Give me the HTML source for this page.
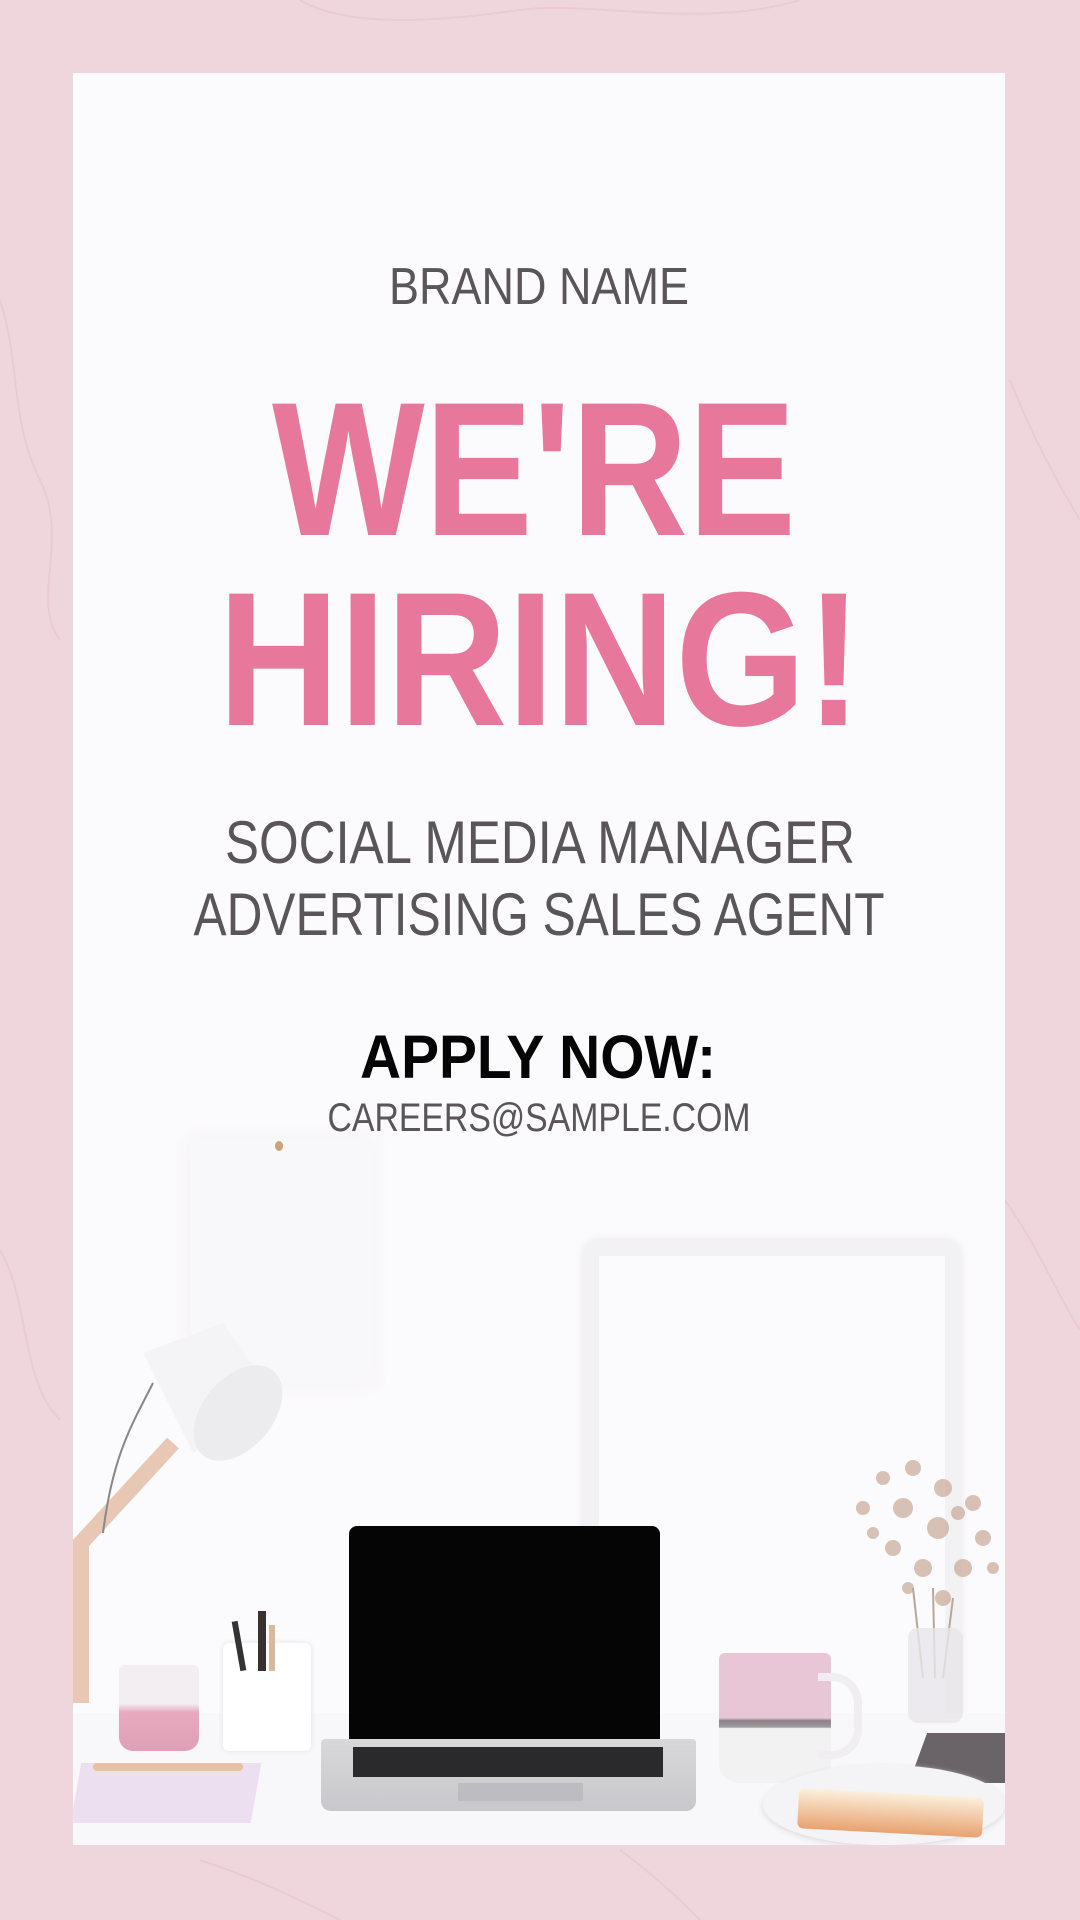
<!DOCTYPE html>
<html><head><meta charset="utf-8"><style>
html,body{margin:0;padding:0}
body{width:1080px;height:1920px;position:relative;overflow:hidden;background:#efd6dd;font-family:"Liberation Sans",sans-serif}
.a{position:absolute}
</style></head><body>
<svg class="a" style="left:0;top:0" width="1080" height="1920">
<g fill="none" stroke="#e4bcc8" stroke-width="2" opacity="0.45">
<path d="M0 300 C20 360 10 420 40 480 S30 600 60 640"/>
<path d="M0 1250 C30 1300 20 1380 60 1420"/>
<path d="M1010 380 C1030 430 1050 470 1080 520"/>
<path d="M1005 1200 C1040 1250 1060 1300 1080 1330"/>
<path d="M300 0 C350 30 450 20 520 10 S700 30 800 0"/>
<path d="M200 1860 C260 1880 300 1900 340 1920"/>
<path d="M620 1850 C660 1880 680 1900 700 1920"/>
</g>
</svg>
<div class="a" style="left:73px;top:73px;width:932px;height:1772px;background:#fbfafc;overflow:hidden">
  <div class="a" style="left:117px;top:1066px;width:183px;height:245px;background:#f8f7f9;box-shadow:0 0 20px #f3f1f5"></div>
  <div class="a" style="left:202px;top:1068px;width:8px;height:10px;border-radius:50%;background:#c9a47a"></div>
  <div class="a" style="left:510px;top:1167px;width:378px;height:500px;border:16px solid #f2f1f4;border-radius:14px;box-sizing:border-box;box-shadow:0 0 8px #e8e6ec"></div>
  <svg class="a" style="left:0;top:1230px" width="260" height="500">
    <path d="M8 400 L8 240 L100 140" stroke="#e8c8b4" stroke-width="16" fill="none"/>
    <path d="M80 80 C60 120 40 150 30 230" stroke="#888" stroke-width="2" fill="none"/>
    <path d="M70 50 L150 20 L200 90 L120 150 Z" fill="#f4f3f5"/>
    <ellipse cx="165" cy="110" rx="35" ry="55" transform="rotate(40 165 110)" fill="#ececee"/>
  </svg>
  <div class="a" style="left:0;top:1640px;width:932px;height:132px;background:#f8f7f9"></div>
  <div class="a" style="left:46px;top:1592px;width:80px;height:86px;background:linear-gradient(#f3eef2 45%,#e6a9bd 55%,#dfa0b6);border-radius:6px 6px 14px 14px"></div>
  <div class="a" style="left:3px;top:1690px;width:180px;height:60px;background:#ecdff0;transform:skewX(-10deg)"></div>
  <div class="a" style="left:20px;top:1690px;width:150px;height:8px;background:#e8c0a4;border-radius:4px"></div>
  <div class="a" style="left:150px;top:1570px;width:88px;height:108px;background:#fff;border-radius:6px;box-shadow:0 0 6px #e4e2e6"></div>
  <div class="a" style="left:163px;top:1548px;width:6px;height:50px;background:#333;transform:rotate(-10deg)"></div>
  <div class="a" style="left:185px;top:1538px;width:8px;height:60px;background:#3a3030"></div>
  <div class="a" style="left:196px;top:1552px;width:6px;height:46px;background:#d9b8a0"></div>
  <div class="a" style="left:276px;top:1453px;width:311px;height:215px;background:#050505;border-radius:8px 8px 0 0"></div>
  <div class="a" style="left:248px;top:1666px;width:375px;height:72px;background:linear-gradient(#d8d8da,#c8c8cc);border-radius:4px 4px 10px 10px"></div>
  <div class="a" style="left:280px;top:1674px;width:310px;height:30px;background:#2a2a2c"></div>
  <div class="a" style="left:385px;top:1710px;width:125px;height:18px;background:#bdbdc1"></div>
  <div class="a" style="left:646px;top:1580px;width:112px;height:130px;background:linear-gradient(#e8c6d6 50%,#8a8286 52%,#a09a9c 57%,#f2f2f3 58%);border-radius:6px 6px 20px 20px"></div>
  <div class="a" style="left:745px;top:1600px;width:36px;height:70px;border:8px solid #f0eef0;border-left:none;border-radius:0 30px 30px 0"></div>
  <div class="a" style="left:845px;top:1660px;width:100px;height:50px;background:#6a6468;transform:skewX(-20deg)"></div>
  <div class="a" style="left:690px;top:1692px;width:242px;height:80px;background:#f4f4f6;border-radius:50%;box-shadow:0 2px 6px #ddd"></div>
  <div class="a" style="left:725px;top:1720px;width:185px;height:40px;background:linear-gradient(#fbf0dc,#e8a270);border-radius:6px;transform:rotate(3deg)"></div>
  <svg class="a" style="left:770px;top:1385px" width="170" height="270">
    <g fill="#c9a996" opacity="0.7">
      <circle cx="40" cy="20" r="7"/><circle cx="70" cy="10" r="8"/><circle cx="100" cy="30" r="9"/><circle cx="130" cy="45" r="8"/><circle cx="20" cy="50" r="7"/><circle cx="60" cy="50" r="10"/><circle cx="95" cy="70" r="11"/><circle cx="140" cy="80" r="8"/><circle cx="50" cy="90" r="8"/><circle cx="120" cy="110" r="9"/><circle cx="80" cy="110" r="9"/><circle cx="100" cy="140" r="8"/><circle cx="30" cy="75" r="6"/><circle cx="115" cy="55" r="7"/><circle cx="150" cy="110" r="6"/><circle cx="65" cy="130" r="6"/>
    </g>
    <path d="M70 130 L80 220 M90 130 L92 220 M110 140 L100 220" stroke="#b9a898" stroke-width="2"/>
    <rect x="65" y="170" width="55" height="95" rx="10" fill="#e8e6ea" opacity="0.8"/>
  </svg>
</div>
<svg class="a" style="left:0;top:0" width="1080" height="1920">
  <text x="539" y="304" text-anchor="middle" font-size="52" fill="#5a5558" textLength="300" lengthAdjust="spacingAndGlyphs">BRAND NAME</text>
  <text x="534" y="535" text-anchor="middle" font-size="191" font-weight="bold" fill="#e8779c" textLength="524" lengthAdjust="spacingAndGlyphs">WE'RE</text>
  <text x="540" y="725" text-anchor="middle" font-size="191" font-weight="bold" fill="#e8779c" textLength="644" lengthAdjust="spacingAndGlyphs">HIRING!</text>
  <text x="540" y="863" text-anchor="middle" font-size="60" fill="#5a5558" textLength="630" lengthAdjust="spacingAndGlyphs">SOCIAL MEDIA MANAGER</text>
  <text x="539" y="935" text-anchor="middle" font-size="60" fill="#5a5558" textLength="691" lengthAdjust="spacingAndGlyphs">ADVERTISING SALES AGENT</text>
  <text x="538" y="1078" text-anchor="middle" font-size="61" font-weight="bold" fill="#050505" textLength="356" lengthAdjust="spacingAndGlyphs">APPLY NOW:</text>
  <text x="539" y="1131" text-anchor="middle" font-size="40" fill="#5a5558" textLength="423" lengthAdjust="spacingAndGlyphs">CAREERS@SAMPLE.COM</text>
</svg>
</body></html>
